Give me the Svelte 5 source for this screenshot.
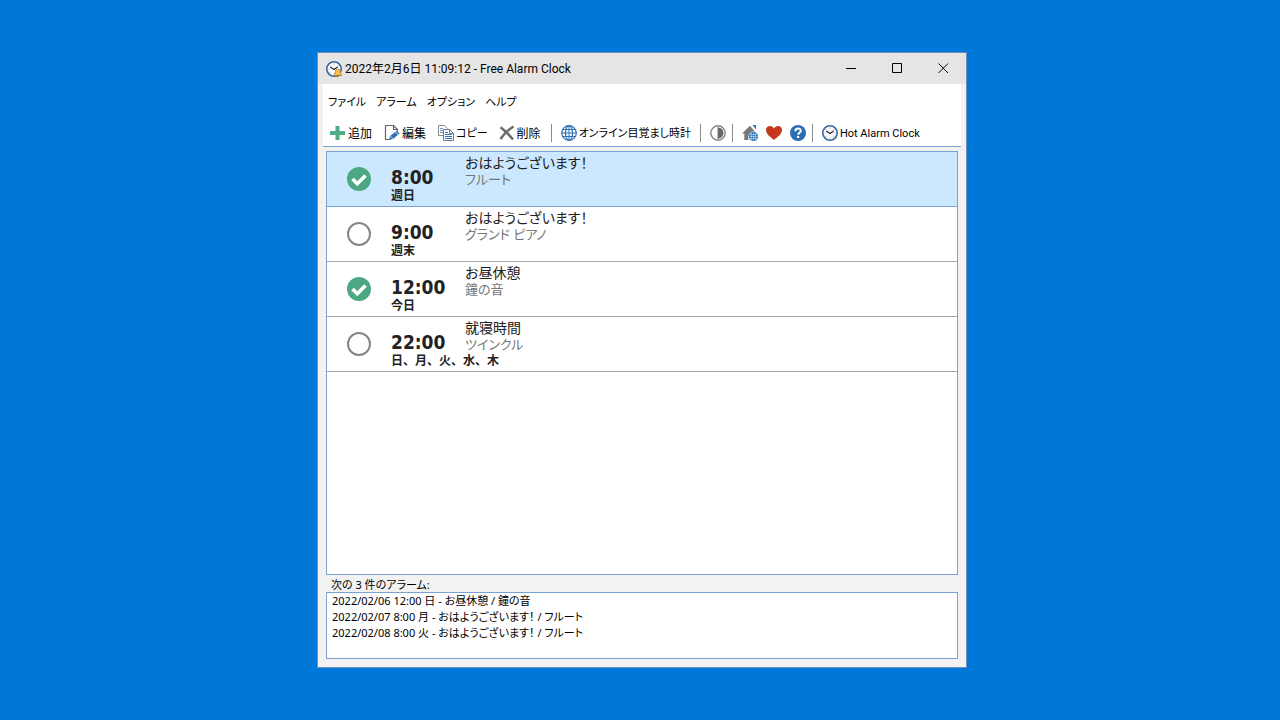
<script>
  const menus = ['ファイル', 'アラーム', 'オプション', 'ヘルプ'];

  let alarms = $state([
    { time: '8:00', days: '週日', title: 'おはようございます！', sound: 'フルート', on: true },
    { time: '9:00', days: '週末', title: 'おはようございます！', sound: 'グランド ピアノ', on: false },
    { time: '12:00', days: '今日', title: 'お昼休憩', sound: '鐘の音', on: true },
    { time: '22:00', days: '日、月、火、水、木', title: '就寝時間', sound: 'ツインクル', on: false }
  ]);
  let selected = $state(0);

  const upcoming = [
    '2022/02/06 12:00 日 - お昼休憩 / 鐘の音',
    '2022/02/07 8:00 月 - おはようございます！ / フルート',
    '2022/02/08 8:00 火 - おはようございます！ / フルート'
  ];
</script>

{#snippet clock()}
  <circle cx="8" cy="8" r="7.2" fill="#fff" stroke="#34679c" stroke-width="1.6" />
  <path d="M8 2.500v1M8 12.500v1M2.500 8h1M12.500 8h1M4.100 4.100l.6.6M11.900 4.100l-.6.6M4.100 11.900l.6-.6M11.900 11.900l-.6-.6" stroke="#999" />
  <path d="M4.200 6l3.800 2.500 3.600-2.500" fill="none" stroke="#222" stroke-width="1.2" />
{/snippet}

<main>
  <div class="window">
    <header>
      <svg class="icon" viewBox="0 0 16 16">
        {@render clock()}
        <path d="M7.500 14.500c1.500-1 1.300-2 1.700-3.500.3-1.800 1.500-2.800 2.700-2.800s2.300 1 2.600 2.800c.4 1.500.2 2.500 1.500 3.500z" fill="#f7c34e" stroke="#b67d1d" stroke-width=".8" />
        <circle cx="11.8" cy="14.900" r="1.100" fill="#a66a12" />
      </svg>
      <h1>2022年2月6日 11:09:12 - Free Alarm Clock</h1>
      <button class="sys" aria-label="最小化">
        <svg viewBox="0 0 11 11"><path d="M0 5.500h10" /></svg>
      </button>
      <button class="sys" aria-label="最大化">
        <svg viewBox="0 0 11 11"><path d="M.5.5h9v9h-9z" /></svg>
      </button>
      <button class="sys" aria-label="閉じる">
        <svg viewBox="0 0 11 11"><path d="M.5.5l9.500 9.500M10 .5L.5 10" /></svg>
      </button>
    </header>

    <div class="bars">
      <nav>
        {#each menus as menu}
          <button>{menu}</button>
        {/each}
      </nav>

      <div class="toolbar">
        <button class="text">
          <svg class="icon" viewBox="0 0 16 16"><path d="M5.500 1h4v5H15v4H9.500v5h-4v-5H0V6h5.500z" fill="#52ad87" /></svg>
          <span>追加</span>
        </button>
        <button class="text">
          <svg class="icon" viewBox="0 0 16 16">
            <path d="M6 14.500H1.500v-14h8l4 4v2M9.500.5v4h4" fill="none" stroke="#666" stroke-width="1.200" />
            <path d="M5 15l1-4 6.800-5.200 2.800 2.800L9 14z" fill="#2f6fb4" />
            <path d="M6.200 11l2.700 2.700M11.400 7l2.800 2.800" stroke="#fff" stroke-width=".8" />
          </svg>
          <span>編集</span>
        </button>
        <button class="text kana">
          <svg class="icon" viewBox="0 0 16 16">
            <path d="M5 10.500H.5V.5h6l3 3" fill="none" stroke="#8a8a8a" />
            <path d="M2 3.500h3M2 5.500h3M2 7.500h3" stroke="#5b93cc" />
            <path d="M5.500 4.500h6l4 4v7h-10z" fill="#fff" stroke="#777" />
            <path d="M11.500 4.500v4h4" fill="none" stroke="#777" />
            <path d="M7 7.500h3M7 9.500h6.500M7 11.500h7M7 13.500h7" stroke="#2f6fb4" />
          </svg>
          <span>コピー</span>
        </button>
        <button class="text">
          <svg class="icon" viewBox="0 0 16 16"><path d="M1.500 2.200Q8 7 14 14.500M14.500 1.500Q6 7 1.500 14" fill="none" stroke="#6d6d6d" stroke-width="2.600" /></svg>
          <span>削除</span>
        </button>
        <i class="sep"></i>
        <button class="text kana">
          <svg class="icon" viewBox="0 0 16 16" fill="none" stroke="#2f72b5" stroke-width="1.200">
            <circle cx="8" cy="8" r="7.300" />
            <ellipse cx="8" cy="8" rx="3.500" ry="7.300" />
            <path d="M8 .7v14.600M.7 8h14.600M2 4.500h12M2 11.500h12" stroke-width="1" />
          </svg>
          <span>オンライン目覚まし時計</span>
        </button>
        <i class="sep"></i>
        <button aria-label="テーマ">
          <svg class="icon" viewBox="0 0 16 16">
            <circle cx="8" cy="8" r="7.200" fill="#fff" stroke="#858585" stroke-width="1.400" />
            <path d="M8 2.500a5.500 5.500 0 0 1 0 11z" fill="#666" />
            <path d="M8 2v12" stroke="#777" />
          </svg>
        </button>
        <i class="sep"></i>
        <button aria-label="ホームページ">
          <svg class="icon" viewBox="0 0 16 16">
            <path d="M0 8.500L8 .8l6.500 7.700H14V15H9.500v-4h-3v4H2.300V8.500z" fill="#777" />
            <path d="M10.500 0H14v4.500z" fill="#2f72b5" />
            <circle cx="11.500" cy="11.500" r="5" fill="#fff" />
            <circle cx="11.500" cy="11.500" r="4.500" fill="#2f72b5" />
            <path d="M8 9.500h7M7.500 11.500h8M8 13.500h7M9.500 8v7M11.500 7.500v8M13.500 8v7" stroke="#dbe8f5" stroke-width=".5" />
          </svg>
        </button>
        <button aria-label="お気に入り">
          <svg class="icon" viewBox="0 0 16 16"><path d="M8 15C4.500 12 0 9 0 5c0-2.500 1.700-4 4-4 1.800 0 3.200 1 4 2.500C8.800 2 10.200 1 12 1c2.300 0 4 1.500 4 4 0 4-4.500 7-8 10z" fill="#c6371c" /></svg>
        </button>
        <button aria-label="ヘルプ">
          <svg class="icon" viewBox="0 0 16 16">
            <circle cx="8" cy="8" r="8" fill="#2c6cb1" />
            <path d="M5.300 6.200C5.300 2.500 10.800 2.600 10.800 5.800c0 1.900-2.700 2-2.700 4" fill="none" stroke="#fff" stroke-width="2" />
            <path d="M7 11h2.200v2H7z" fill="#fff" />
          </svg>
        </button>
        <i class="sep"></i>
        <button class="text kana">
          <svg class="icon" viewBox="0 0 16 16">{@render clock()}</svg>
          <span>Hot Alarm Clock</span>
        </button>
      </div>
    </div>

    <section>
      <ul class="alarms">
        {#each alarms as alarm, i}
          <li class:selected={selected === i} onclick={() => (selected = i)} role="presentation">
            <label>
              <input type="checkbox" bind:checked={alarm.on} aria-label={alarm.time} />
              <svg class="tick" viewBox="0 0 24 24">
                {#if alarm.on}
                  <circle cx="12" cy="12" r="12" fill="#4ba882" />
                  <path d="M5.500 12l4.800 4.800 8.200-8.400" fill="none" stroke="#fff" stroke-width="3.600" />
                {:else}
                  <circle cx="12" cy="12" r="11" fill="#fff" stroke="#858585" stroke-width="2" />
                {/if}
              </svg>
            </label>
            <div class="when">
              <strong>{alarm.time}</strong>
              <b>{alarm.days}</b>
            </div>
            <div class="what">
              <span>{alarm.title}</span>
              <span class="sound">{alarm.sound}</span>
            </div>
          </li>
        {/each}
      </ul>

      <h2>次の 3 件のアラーム:</h2>
      <ul class="upcoming">
        {#each upcoming as line}
          <li>{line}</li>
        {/each}
      </ul>
    </section>
  </div>
</main>

<style>
  :global(body) {
    background: #0078d7;
  }

  main {
    min-height: 100vh;
    box-sizing: border-box;
    padding-left: 4px;
    display: flex;
    align-items: center;
    justify-content: center;
    font: 11px/16px "Noto Sans", "Noto Sans CJK JP", sans-serif;
    font-feature-settings: "palt";
    color: #000;
  }

  .window {
    width: 100%;
    max-width: 650px;
    box-sizing: border-box;
    border: 1px solid #6f8fb8;
    background: #f2f2f2;
  }

  header {
    display: flex;
    align-items: center;
    height: 31px;
    padding-left: 8px;
    background: #e5e5e5;
  }

  h1 {
    flex: 1;
    margin: 0 0 0 3px;
    font-family: Roboto, "Noto Sans CJK JP", sans-serif;
    font-size: 12px;
    font-weight: normal;
    white-space: nowrap;
  }

  button {
    display: flex;
    align-items: center;
    padding: 0;
    border: 0;
    background: none;
    font: inherit;
    font-feature-settings: inherit;
    color: inherit;
    white-space: nowrap;
  }

  .sys {
    width: 46px;
    height: 31px;
    justify-content: center;
  }

  .sys svg {
    width: 11px;
    height: 11px;
    fill: none;
    stroke: #000;
  }

  .icon {
    width: 16px;
    height: 16px;
    flex: none;
  }

  .bars {
    margin: 0 5px;
    background: #fff;
    border-bottom: 1px solid #7aa2d2;
  }

  nav {
    display: flex;
    gap: 10px;
    padding: 10px 5px;
  }

  .toolbar {
    display: flex;
    align-items: center;
    height: 26px;
    padding-left: 7px;
    gap: 8px;
    font-family: Roboto, "Noto Sans CJK JP", sans-serif;
    font-size: 12px;
  }

  .toolbar .text {
    gap: 2px;
    padding-right: 4px;
  }

  .toolbar .kana {
    font-size: 11px;
    padding-right: 3px;
  }

  .toolbar span {
    padding-top: 2px;
  }

  .sep {
    width: 1px;
    height: 18px;
    margin: 0 1px 0 -2px;
    background: #8a8a8a;
  }

  section {
    padding: 4px 8px 8px;
  }

  ul {
    margin: 0;
    padding: 0;
    list-style: none;
    background: #fff;
    border: 1px solid #7aa2d2;
  }

  .alarms {
    min-height: 422px;
  }

  .alarms li {
    display: flex;
    height: 54px;
    border-bottom: 1px solid #a9a9a9;
    color: #222;
  }

  .alarms .selected {
    background: #cce8ff;
    border-color: #7aa2d2;
  }

  label {
    position: relative;
    width: 24px;
    height: 24px;
    margin: 15px 20px;
  }

  input {
    position: absolute;
    inset: 0;
    width: 24px;
    height: 24px;
    margin: 0;
    opacity: 0;
  }

  .tick {
    display: block;
    width: 24px;
    height: 24px;
  }

  .when {
    width: 74px;
    padding-top: 14px;
    white-space: nowrap;
  }

  strong,
  b,
  .what span {
    display: block;
  }

  strong {
    font-family: "DejaVu Sans Condensed", "DejaVu Sans", sans-serif;
    font-size: 19px;
    line-height: 22px;
  }

  b {
    font-family: "Noto Sans CJK JP", sans-serif;
    font-feature-settings: normal;
    font-size: 12px;
    line-height: 13px;
  }

  .what {
    padding-top: 3px;
    font-size: 14px;
    line-height: 16px;
  }

  .what .sound {
    color: #777;
    font-size: 13px;
  }

  h2 {
    margin: 0 5px;
    padding-top: 2px;
    font-size: 11px;
    font-weight: normal;
    line-height: 15px;
  }

  .upcoming {
    min-height: 65px;
  }

  .upcoming li {
    padding-left: 5px;
  }
</style>
